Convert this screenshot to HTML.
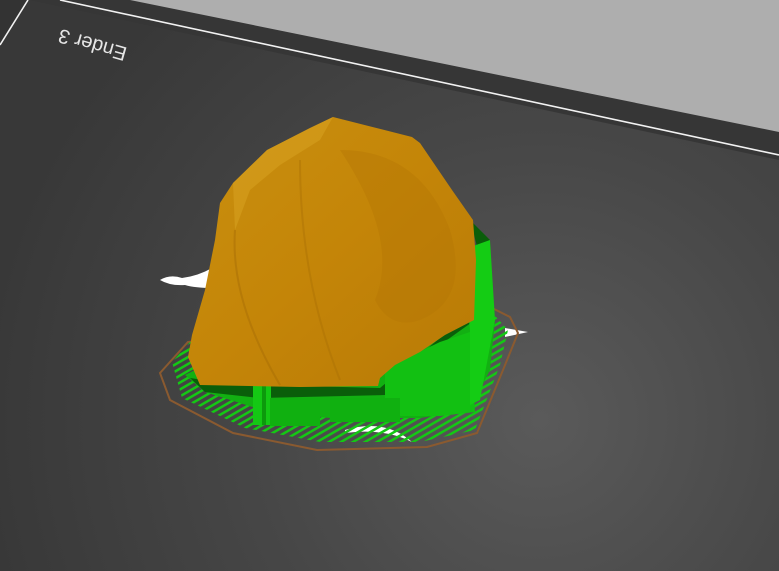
<!DOCTYPE html>
<html><head><style>
html,body{margin:0;padding:0;width:779px;height:571px;overflow:hidden;background:#444}
</style></head><body>
<svg width="779" height="571" viewBox="0 0 779 571" xmlns="http://www.w3.org/2000/svg">
<defs>
<radialGradient id="bg" cx="540" cy="420" r="560" gradientUnits="userSpaceOnUse">
<stop offset="0" stop-color="#5a5a5a"/><stop offset="0.5" stop-color="#474747"/><stop offset="1" stop-color="#383838"/>
</radialGradient>
<linearGradient id="or" x1="0" y1="0" x2="1" y2="1">
<stop offset="0" stop-color="#c99010"/><stop offset="0.5" stop-color="#c48508"/><stop offset="1" stop-color="#b87a06"/>
</linearGradient>
<pattern id="stripes" width="6" height="6" patternUnits="userSpaceOnUse" patternTransform="rotate(60)">
<rect width="6" height="6" fill="none"/><rect width="2.5" height="6" fill="#14c814"/>
</pattern>
</defs>
<rect width="779" height="571" fill="url(#bg)"/>
<polygon points="0,0 28,0 0,45" fill="#333"/>
<polygon points="30,0 779,0 779,160 " fill="#363636"/>
<polygon points="130,0 779,0 779,132" fill="#aeaeae"/>
<line x1="60" y1="0" x2="779" y2="155" stroke="#f2f2f2" stroke-width="1.6"/>
<line x1="28" y1="0" x2="0" y2="45" stroke="#f2f2f2" stroke-width="1.6"/>
<text x="0" y="0" transform="translate(128,48) rotate(196)" font-family="Liberation Sans, sans-serif" font-size="20" fill="#e6e6e6">Ender 3</text>
<!-- white blobs -->
<path d="M160,280 Q170,274 182,278 Q198,276 212,268 L214,288 Q195,288 185,285 Q170,286 160,280Z" fill="#fff"/>
<path d="M505,328 L528,332 L505,337Z" fill="#fff"/>
<path d="M345,430 Q385,418 412,442 Q385,428 345,433Z" fill="#fff"/>
<!-- brown skirt -->
<polygon points="160,373 188,342 490,307 510,317 518,333 503,370 477,433 427,447 317,450 233,433 170,400" fill="none" stroke="#8a5a30" stroke-width="2"/>
<!-- green infill base -->
<polygon points="172,362 190,342 485,305 508,330 500,365 475,430 420,442 320,442 245,428 182,398" fill="url(#stripes)"/>
<polygon points="185,375 205,365 480,300 495,320 490,370 470,410 420,418 330,418 262,410 205,392" fill="#12b012"/>
<polygon points="190,378 230,384 380,388 440,338 478,300 478,250 470,220 490,240 492,300 475,320 440,345 400,375 385,395 260,398 205,392" fill="#0a5e0a"/>
<rect x="253" y="340" width="18" height="85" fill="#14c814"/>
<rect x="262" y="345" width="4" height="80" fill="#0c9a0c"/>
<polygon points="385,368 440,342 470,332 475,412 440,416 385,416" fill="#12c012"/>
<polygon points="462,250 490,240 495,320 480,400 470,405 470,330" fill="#14cc14"/>
<rect x="330" y="398" width="70" height="24" fill="#10b010"/>
<rect x="270" y="398" width="50" height="28" fill="#10b010"/>
<!-- orange body -->
<path d="M333,117 L412,137 L420,143 L452,190 L473,220 L476,260 L474,320 L445,335 L420,352 L395,365 L380,378 L378,386 L300,387 L200,385 L188,357 L192,335 L205,290 L215,240 L220,203 L233,183 L267,150 L310,128 Z" fill="url(#or)"/>
<path d="M233,183 L267,150 L310,128 L333,117 L320,140 L280,165 L250,190 L235,230 Z" fill="#d6a020" opacity="0.6"/>
<path d="M340,150 Q420,150 450,230 Q470,300 420,320 Q390,330 375,300 Q400,240 340,150Z" fill="#b37606" opacity="0.4"/>
<path d="M235,230 Q230,300 280,385" fill="none" stroke="#a86e05" stroke-width="2" opacity="0.5"/>
<path d="M300,160 Q300,280 340,380" fill="none" stroke="#a86e05" stroke-width="2" opacity="0.4"/>
</svg>
</body></html>
